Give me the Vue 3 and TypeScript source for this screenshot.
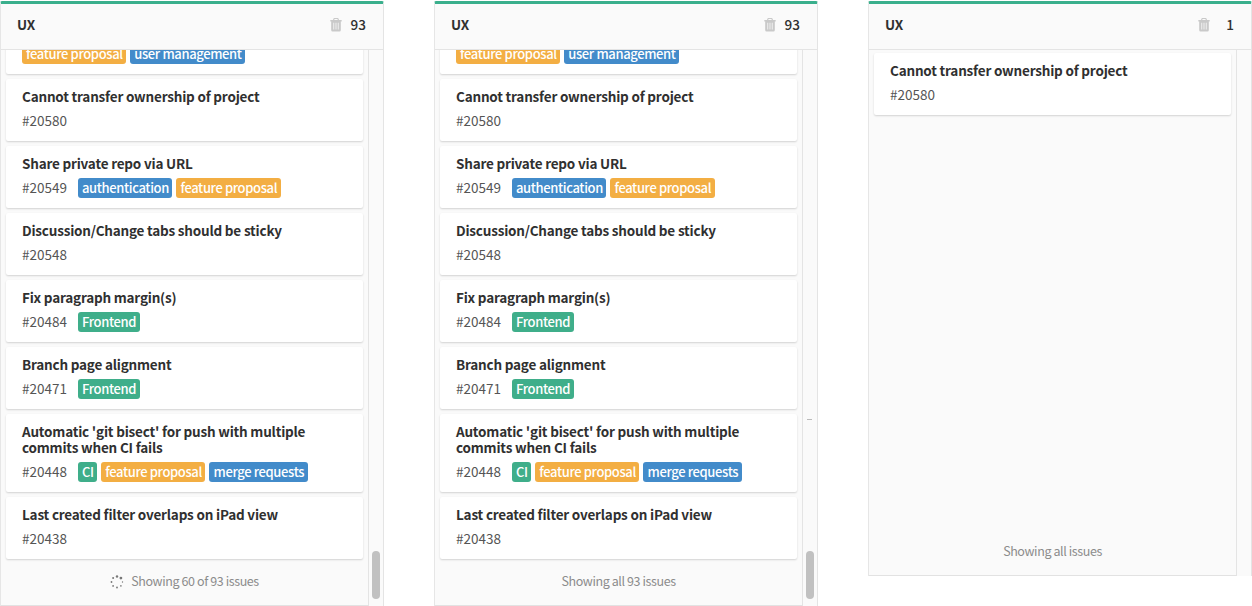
<script setup lang="ts">
interface Label {
  text: string
  tone: 'orange' | 'blue' | 'green'
}

interface Issue {
  id: string
  lines: string[]
  labels: Label[]
}

interface Board {
  key: string
  count: number
  issues: Issue[]
  status: string
  loading: boolean
  scroll: boolean
  marker: boolean
}

const feature: Label = { text: 'feature proposal', tone: 'orange' }
const frontend: Label = { text: 'Frontend', tone: 'green' }

const ownership: Issue = { id: '#20580', lines: ['Cannot transfer ownership of project'], labels: [] }

const issues: Issue[] = [
  { id: '', lines: [], labels: [feature, { text: 'user management', tone: 'blue' }] },
  ownership,
  { id: '#20549', lines: ['Share private repo via URL'], labels: [{ text: 'authentication', tone: 'blue' }, feature] },
  { id: '#20548', lines: ['Discussion/Change tabs should be sticky'], labels: [] },
  { id: '#20484', lines: ['Fix paragraph margin(s)'], labels: [frontend] },
  { id: '#20471', lines: ['Branch page alignment'], labels: [frontend] },
  {
    id: '#20448',
    lines: ["Automatic 'git bisect' for push with multiple", 'commits when CI fails'],
    labels: [{ text: 'CI', tone: 'green' }, feature, { text: 'merge requests', tone: 'blue' }],
  },
  { id: '#20438', lines: ['Last created filter overlaps on iPad view'], labels: [] },
]

const boards: Board[] = [
  { key: 'a', count: 93, issues, status: 'Showing 60 of 93 issues', loading: true, scroll: true, marker: false },
  { key: 'b', count: 93, issues, status: 'Showing all 93 issues', loading: false, scroll: true, marker: true },
  { key: 'c', count: 1, issues: [ownership], status: 'Showing all issues', loading: false, scroll: false, marker: false },
]
</script>

<template>
  <main class="boards">
    <section v-for="board in boards" :key="board.key" class="board" :class="{ short: !board.scroll }">
      <header class="head">
        <h2 class="name">UX</h2>
        <svg class="trash" width="12" height="14" viewBox="0 0 12 14">
          <path
            fill="#c9c9c9"
            fill-rule="evenodd"
            d="M4.300 0h3.400q.6 0 .8.6L9 2h2.700v1.400h-.9V12q0 1.500-1.400 1.500H2.600Q1.200 13.500 1.200 12V3.400H.3V2H3L3.500.6Q3.700 0 4.300 0ZM4.600 1 4.200 2h3.600L7.400 1ZM3.400 4.700v6.800h.8V4.700Zm2.200 0v6.800h.8V4.700Zm2.200 0v6.800h.8V4.700Z"
          />
        </svg>
        <span class="count">{{ board.count }}</span>
      </header>
      <div class="body">
        <div class="list">
          <article v-for="(issue, i) in board.issues" :key="i" class="card" :class="{ partial: !issue.id }">
            <h3 v-if="issue.lines.length" class="title">
              <span v-for="line in issue.lines" :key="line" class="line">{{ line }}</span>
            </h3>
            <div class="meta">
              <span v-if="issue.id" class="id">{{ issue.id }}</span>
              <span v-for="label in issue.labels" :key="label.text" class="label" :class="label.tone">{{ label.text }}</span>
            </div>
          </article>
          <p class="status">
            <svg v-if="board.loading" class="spinner" width="14" height="14" viewBox="0 0 14 14" fill="#777">
              <circle cx="7" cy="1.500" r="1.200" />
              <circle cx="10.900" cy="3.100" r="1.400" />
              <circle cx="12.500" cy="7" r=".7" />
              <circle cx="10.900" cy="10.900" r=".8" />
              <circle cx="7" cy="12.500" r=".9" />
              <circle cx="3.100" cy="10.900" r=".9" />
              <circle cx="1.500" cy="7" r=".9" />
              <circle cx="3.100" cy="3.100" r="1" />
            </svg>
            <span>{{ board.status }}</span>
          </p>
        </div>
        <span v-if="board.marker" class="marker"></span>
        <span v-if="board.scroll" class="thumb"></span>
      </div>
    </section>
  </main>
</template>

<style>
body {
  margin: 0;
  background: #fff;
}
</style>

<style scoped>
.boards {
  display: flex;
  gap: 50px;
  width: 1252px;
  height: 606px;
  overflow: hidden;
  align-items: flex-start;
  font-family: "Noto Sans CJK SC", "Noto Sans", sans-serif;
  color: #303030;
}
.board {
  box-sizing: border-box;
  flex: none;
  display: flex;
  flex-direction: column;
  width: 384px;
  height: 605px;
  margin-top: 1px;
  border-top: 3px solid #3aaf8c;
  border-left: 1px solid #e6e6e6;
  border-right: 1px solid #e4e4e4;
  border-radius: 2px 2px 0 0;
  background: #fafafa;
}
.board.short {
  height: 575px;
}
.head {
  box-sizing: border-box;
  flex: none;
  display: flex;
  align-items: center;
  height: 46px;
  padding: 0 17px 5px 16px;
  border-bottom: 1px solid #e4e4e4;
}
.name {
  flex: 1;
  margin: 0;
  font-size: 13.5px;
  font-weight: 700;
  letter-spacing: -0.2px;
}
.trash {
  margin-top: 2px;
  margin-right: 9px;
}
.count {
  font-size: 13.5px;
  font-weight: 500;
  min-width: 15px;
  text-align: right;
}
.body {
  position: relative;
  flex: 1;
  min-height: 0;
  overflow: hidden;
}
.list {
  box-sizing: border-box;
  display: flex;
  flex-direction: column;
  justify-content: flex-end;
  gap: 5px;
  width: 368px;
  height: 100%;
  padding: 3px 5px 0;
  border-right: 1px solid #e4e4e4;
  border-bottom: 1px solid #e2e2e2;
}
.short .list {
  justify-content: flex-start;
}
.card {
  box-sizing: border-box;
  flex: none;
  width: 357px;
  min-height: 62px;
  padding: 9px 16px 10px;
  border-radius: 2px;
  background: #fff;
  box-shadow: 0 1px 2px rgba(0, 0, 0, 0.16);
}
.card.partial {
  display: flex;
  align-items: flex-end;
}
.title {
  margin: 0 0 7px;
  font-size: 13.5px;
  font-weight: 700;
  line-height: 16px;
  letter-spacing: -0.195px;
}
.line {
  display: block;
  white-space: nowrap;
}
.meta {
  display: flex;
  gap: 4px;
  height: 20px;
}
.id {
  width: 52px;
  font-size: 13.5px;
  line-height: 18px;
  color: #555;
}
.label {
  box-sizing: border-box;
  height: 20px;
  padding: 0 3.5px 0 4px;
  border-radius: 3px;
  color: #fff;
  font-size: 13px;
  font-weight: 500;
  line-height: 19px;
  letter-spacing: -0.36px;
  white-space: nowrap;
}
.partial .label {
  line-height: 20px;
}
.orange {
  background: #f3ae43;
}
.blue {
  background: #428bca;
}
.green {
  background: #3fae8a;
}
.status {
  box-sizing: border-box;
  flex: none;
  display: flex;
  align-items: center;
  justify-content: center;
  gap: 7px;
  height: 41px;
  margin: 0;
  padding-bottom: 7px;
  font-size: 12.5px;
  line-height: 20px;
  letter-spacing: -0.4px;
  color: #8c8c8c;
}
.spinner {
  margin-top: 1px;
}
.short .status {
  margin-top: auto;
}
.marker {
  position: absolute;
  right: 5px;
  top: 369px;
  width: 5px;
  height: 1px;
  background: #bbb;
}
.thumb {
  position: absolute;
  right: 3px;
  bottom: 7px;
  width: 8px;
  height: 48px;
  border-radius: 4px;
  background: #c1c1c1;
}
</style>
